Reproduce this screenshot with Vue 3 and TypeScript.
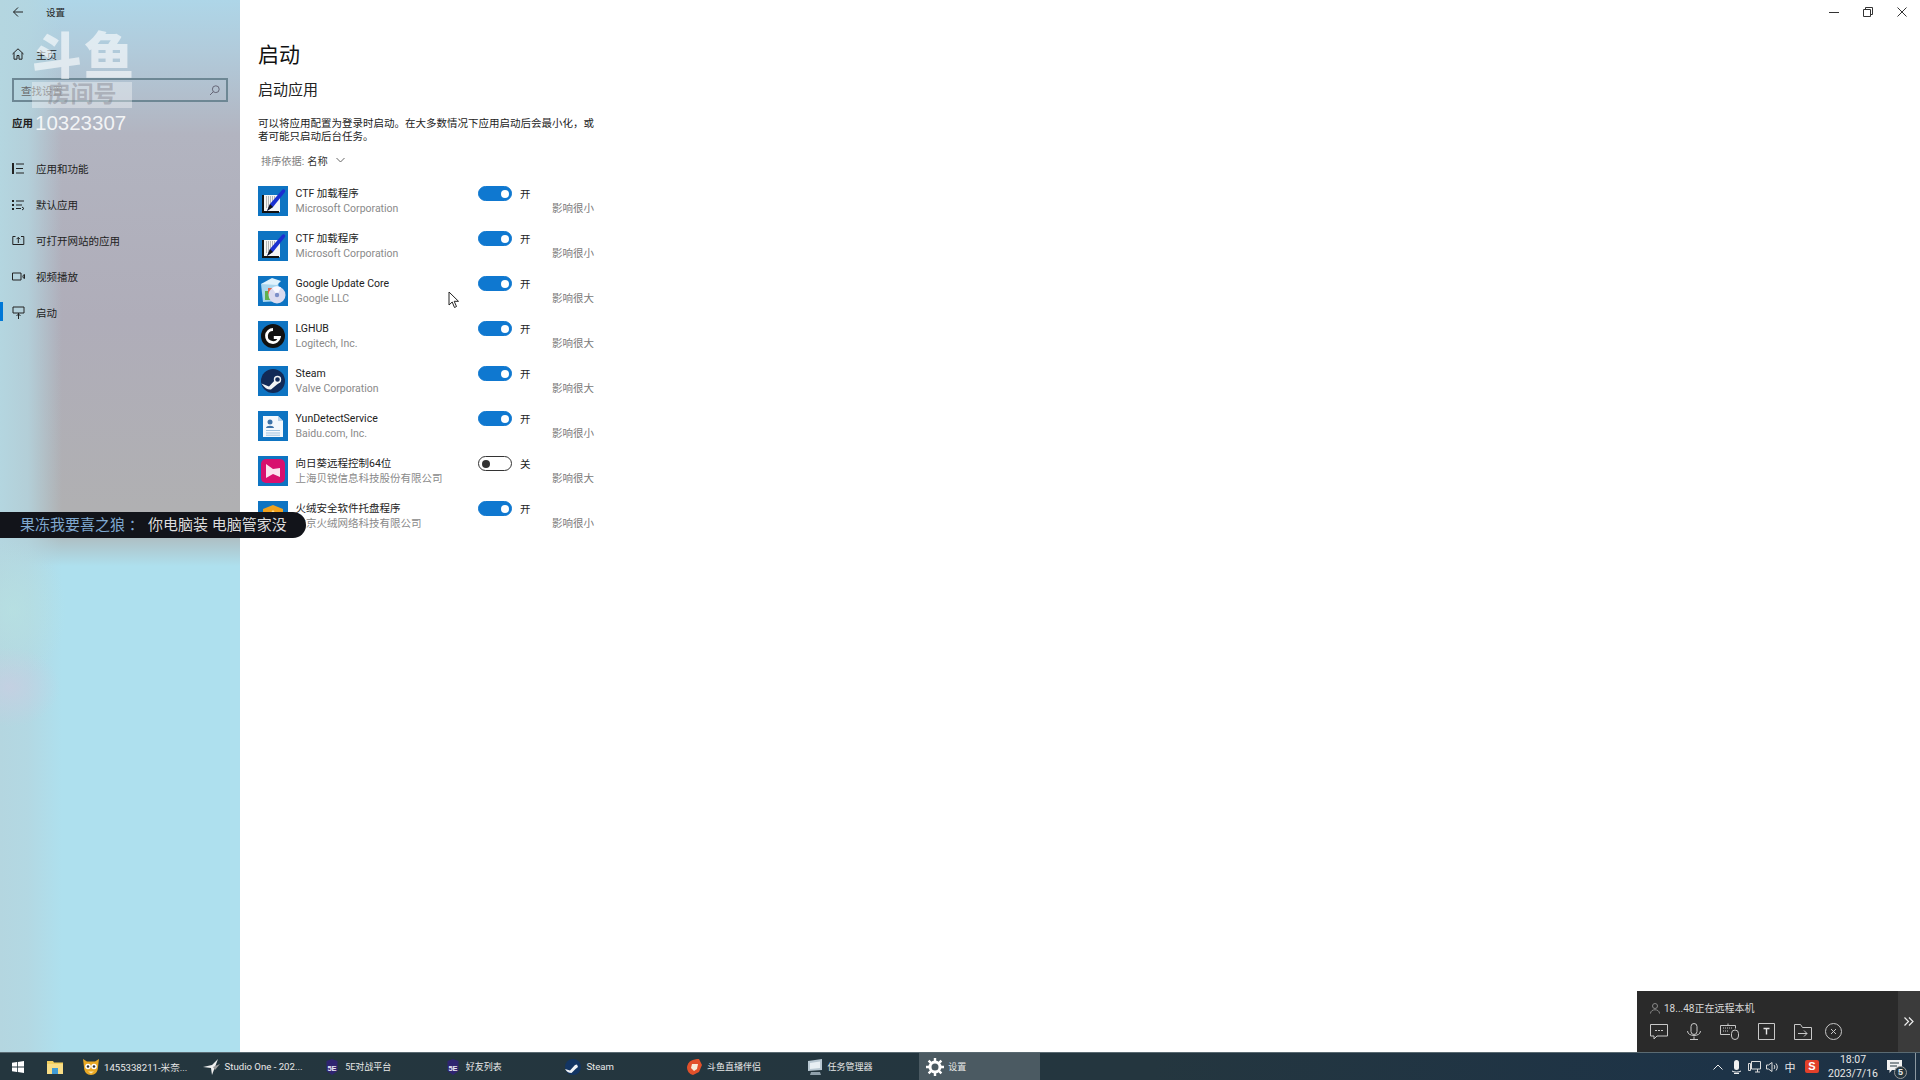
<script setup lang="ts">
interface StartupApp {
  name: string;
  company: string;
  on: boolean;
  impact: string;
  icon: string;
}

const apps: StartupApp[] = [
  { name: "CTF 加载程序", company: "Microsoft Corporation", on: true, impact: "影响很小", icon: "ctf" },
  { name: "CTF 加载程序", company: "Microsoft Corporation", on: true, impact: "影响很小", icon: "ctf" },
  { name: "Google Update Core", company: "Google LLC", on: true, impact: "影响很大", icon: "google" },
  { name: "LGHUB", company: "Logitech, Inc.", on: true, impact: "影响很大", icon: "lghub" },
  { name: "Steam", company: "Valve Corporation", on: true, impact: "影响很大", icon: "steam" },
  { name: "YunDetectService", company: "Baidu.com, Inc.", on: true, impact: "影响很小", icon: "doc" },
  { name: "向日葵远程控制64位", company: "上海贝锐信息科技股份有限公司", on: false, impact: "影响很大", icon: "sunflower" },
  { name: "火绒安全软件托盘程序", company: "北京火绒网络科技有限公司", on: true, impact: "影响很小", icon: "huorong" },
];

const navItems = [
  { label: "应用和功能", icon: "list" },
  { label: "默认应用", icon: "defaults" },
  { label: "可打开网站的应用", icon: "web" },
  { label: "视频播放", icon: "video" },
  { label: "启动", icon: "startup" },
];

const tasks = [
  { label: "1455338211-米奈...", icon: "cat" },
  { label: "Studio One - 202...", icon: "studio" },
  { label: "5E对战平台", icon: "se", cjk: true },
  { label: "好友列表", icon: "se", cjk: true },
  { label: "Steam", icon: "steam" },
  { label: "斗鱼直播伴侣", icon: "douyu", cjk: true },
  { label: "任务管理器", icon: "taskmgr", cjk: true },
  { label: "设置", icon: "gear", cjk: true, active: true },
];
</script>

<template>
  <div class="screen">
    <div class="window">
      <aside class="sidebar">
        <div class="titlebar">
          <svg class="back" width="12" height="12" viewBox="0 0 12 12"><path d="M11 6H1.500M6 1.500 1.500 6 6 10.500" fill="none" stroke="#222" stroke-width="1" /></svg>
          <span>设置</span>
        </div>
        <div class="home">
          <svg width="12" height="12" viewBox="0 0 12 12"><path d="M.5 6 6 .8 11.500 6M2 4.800v6.400h3V7.500h2v3.700h3V4.800" fill="none" stroke="#222" stroke-width="1" /></svg>
          <span>主页</span>
        </div>
        <div class="search">
          <span>查找设置</span>
          <svg width="11" height="11" viewBox="0 0 11 11"><circle cx="6.800" cy="4.200" r="3.400" fill="none" stroke="#667" stroke-width="1" /><path d="M4.400 6.600 1 10" stroke="#667" stroke-width="1" /></svg>
        </div>
        <div class="group">应用</div>
        <nav class="nav">
          <div v-for="(item, i) in navItems" :key="item.label" :class="['nav-item', { current: i === navItems.length - 1 }]">
            <svg width="13" height="13" viewBox="0 0 13 13" fill="none" stroke="#222" stroke-width="1">
              <template v-if="item.icon === 'list'"><path d="M1 1v11" stroke-width="2" /><path d="M4 2h8M4 6.500h7M4 11h8" /></template>
              <template v-else-if="item.icon === 'defaults'"><path d="M1 2v2M1 6v2M1 10v2" stroke-width="2" /><path d="M4 3h8M4 7h6M4 10.500h5M10 9l2 1.500-2 1.500" /></template>
              <template v-else-if="item.icon === 'web'"><path d="M3.500 2.500H.8v8h11v-8H9M6.300 9V3.500M4.500 5.200l1.800-1.800 1.800 1.800" /></template>
              <template v-else-if="item.icon === 'video'"><path d="M.5 3h8.500v7H.5zM11 5.500l1.500-1v4l-1.500-1z" /></template>
              <template v-else><path d="M1 1h11v6H1zM6.500 7v6M4.500 10l2-2 2 2" /></template>
            </svg>
            <span>{{ item.label }}</span>
          </div>
        </nav>
      </aside>

      <main class="content">
        <h1>启动</h1>
        <h2>启动应用</h2>
        <p>可以将应用配置为登录时启动。在大多数情况下应用启动后会最小化，或者可能只启动后台任务。</p>
        <div class="sort">
          <span class="sort-key">排序依据:</span>
          <span>名称</span>
          <svg width="9" height="6" viewBox="0 0 9 6"><path d="M.5 1 4.500 5l4-4" fill="none" stroke="#666" stroke-width="1" /></svg>
        </div>

        <div class="rows">
          <div v-for="(app, i) in apps" :key="i" class="row">
            <svg class="app-icon" width="30" height="30" viewBox="0 0 30 30">
              <rect width="30" height="30" fill="#0e74c2" />
              <template v-if="app.icon === 'ctf'">
                <path d="M5 9h17v17H4z" fill="#f5f5f5" />
                <path d="M8 11h10M8 13h9M8 15h8M8 17h7M8 19h6M8 21h5" stroke="#777" stroke-width="1" stroke-dasharray="1 1" />
                <path d="M4 9v18h17v-2H6V9z" fill="#111" />
                <path d="M9 25 12 18 24 4c1.500-1.500 4-.5 3 2L15 21z" fill="#1a2fd0" />
                <path d="M9 25 12 18l3 3z" fill="#111" />
              </template>
              <template v-else-if="app.icon === 'google'">
                <path d="M3 8 20 5l2 20-17 1z" fill="#a9d6ee" />
                <path d="M3 8 14 2l9 3-4 4z" fill="#dff2fc" />
                <path d="M7 15h6v9H7z" fill="#62b04e" />
                <path d="M10 12h4v6h-4z" fill="#e0674a" />
                <circle cx="19" cy="19" r="8.500" fill="#dcdcf0" />
                <path d="M19 19 14 12a8.500 8.500 0 0 1 9-.5z" fill="#f8f8ff" />
                <circle cx="19" cy="19" r="2.200" fill="#7c8fc8" />
              </template>
              <template v-else-if="app.icon === 'lghub'">
                <circle cx="15" cy="15" r="12" fill="#111" />
                <path d="M15 8.500a6.500 6.500 0 1 0 6.300 8h-5.500" fill="none" stroke="#fff" stroke-width="2.800" />
              </template>
              <template v-else-if="app.icon === 'steam'">
                <circle cx="15" cy="15" r="12" fill="#122a57" />
                <path d="M3.500 17.500 11 20.500 18 13l3-1 1.500 4-3.500 2.500-6 5c-3 .5-6-1-9.500-6z" fill="#f2f4f6" />
                <circle cx="19.500" cy="13.500" r="3" fill="#122a57" stroke="#f2f4f6" stroke-width="1.400" />
              </template>
              <template v-else-if="app.icon === 'doc'">
                <path d="M5 5h15l5 5v16H5z" fill="#f4f8fc" />
                <path d="M20 5v5h5z" fill="#b9d3ea" />
                <circle cx="12" cy="11" r="2.500" fill="#3d72a8" />
                <path d="M8 17c0-3 8-3 8 0z" fill="#3d72a8" />
                <path d="M8 19.500h14M8 22h14M8 24.200h14" stroke="#9fc3e0" stroke-width="1" />
              </template>
              <template v-else-if="app.icon === 'sunflower'">
                <rect x="3" y="3" width="24" height="24" rx="5" fill="#d8106e" />
                <path d="M8 8 15 13l7-1v9l-7-3-7 4z" fill="#fbe3ee" />
              </template>
              <template v-else>
                <path d="M15 4 25 8v9c0 5-5 8-10 10-5-2-10-5-10-10V8z" fill="#f0a21e" />
                <path d="M15 9l4 5-1.500 5h-5L11 14z" fill="#ffe08a" />
              </template>
            </svg>
            <div class="app-text">
              <div class="app-name">{{ app.name }}</div>
              <div class="app-company">{{ app.company }}</div>
            </div>
            <div class="app-side">
              <div class="toggle-line">
                <span :class="['toggle', { on: app.on }]"><i></i></span>
                <span class="state">{{ app.on ? "开" : "关" }}</span>
              </div>
              <div class="impact">{{ app.impact }}</div>
            </div>
          </div>
        </div>

        <div class="win-controls">
          <svg width="10" height="10" viewBox="0 0 10 10"><path d="M0 5.500h10" stroke="#333" stroke-width="1" /></svg>
          <svg width="10" height="10" viewBox="0 0 10 10"><path d="M.5 2.500h7v7h-7zM2.500 2.500v-2h7v7h-2" fill="none" stroke="#333" stroke-width="1" /></svg>
          <svg width="10" height="10" viewBox="0 0 10 10"><path d="M.5.500l9 9M9.500.500l-9 9" stroke="#333" stroke-width="1" /></svg>
        </div>
      </main>
    </div>

    <footer class="taskbar">
      <div class="task-start">
        <svg width="12" height="12" viewBox="0 0 12 12"><path d="M0 1.800 5 1v4.600H0zM5.800.9 12 0v5.600H5.800zM0 6.400h5V11l-5-.8zM5.800 6.400H12V12l-6.200-.9z" fill="#fff" /></svg>
      </div>
      <div class="task-start files">
        <svg width="16" height="14" viewBox="0 0 16 14"><path d="M0 1h6l1 1.500h9V14H0z" fill="#f2cf5f" /><path d="M0 4h16v10H0z" fill="#f8dd86" /><path d="M5 8h6v6H5z" fill="#3f9bd6" /></svg>
      </div>
      <div v-for="task in tasks" :key="task.label" :class="['task', { active: task.active, cjk: task.cjk }]">
        <svg class="task-icon" width="18" height="18" viewBox="0 0 18 18">
          <template v-if="task.icon === 'cat'">
            <path d="M1 1 5 3.500h8L17 1l-1 8c0 5-3 8-7 8s-7-3-7-8z" fill="#eaa925" />
            <circle cx="6" cy="8.500" r="2.800" fill="#fff" /><circle cx="12" cy="8.500" r="2.800" fill="#fff" />
            <circle cx="6" cy="8.500" r="1.300" fill="#333" /><circle cx="12" cy="8.500" r="1.300" fill="#333" />
            <path d="M6 13.500h6l-3 2z" fill="#fbe8b0" />
          </template>
          <template v-else-if="task.icon === 'studio'">
            <path d="M0 9 9 7 15 1 12 9 9 17 8 10z" fill="#f1f1f1" />
            <path d="M10 9 17 6 12 12z" fill="#9a9a9a" />
          </template>
          <template v-else-if="task.icon === 'se'">
            <path d="M3.500 3 9 1l5.500 2v10L9 17l-5.500-4z" fill="#2f2470" />
            <text x="9" y="12.500" text-anchor="middle" font-size="7.500" font-weight="700" fill="#e8e8f4" font-family="Liberation Sans">5E</text>
          </template>
          <template v-else-if="task.icon === 'steam'">
            <circle cx="9" cy="9" r="8" fill="#133563" />
            <path d="M1 11 6 12.500 11 7l2-.5 1 2.500-2.500 2-4 4C5 15 3 14 1 11z" fill="#f0f3f6" />
          </template>
          <template v-else-if="task.icon === 'douyu'">
            <path d="M2 9C3 3 8 1 14 1l3 6-3 7-6 3C4 16 2 13 2 9z" fill="#e2512b" />
            <path d="M7 6h6l-1 5-3 2-3-3z" fill="#f7ecd8" />
          </template>
          <template v-else-if="task.icon === 'taskmgr'">
            <path d="M2 3 16 1v11L2 13z" fill="#b9c8d2" />
            <path d="M4 5l10-1.500v6.500L4 11z" fill="#e8eff3" />
            <path d="M5 14h9l1 3H4z" fill="#8fa0ab" />
          </template>
          <template v-else>
            <circle cx="9" cy="9" r="5" fill="none" stroke="#fff" stroke-width="3" />
            <path d="M9 0v4M9 14v4M0 9h4M14 9h4M2.600 2.600l2.800 2.800M12.600 12.600l2.800 2.800M15.400 2.600l-2.800 2.800M5.400 12.600l-2.800 2.800" stroke="#fff" stroke-width="2.400" />
          </template>
        </svg>
        <span>{{ task.label }}</span>
      </div>

      <div class="tray">
        <span class="tray-cell"><svg width="10" height="6" viewBox="0 0 10 6"><path d="M.5 5.500 5 1l4.500 4.500" fill="none" stroke="#eee" stroke-width="1" /></svg></span>
        <span class="tray-cell"><svg width="9" height="14" viewBox="0 0 9 14"><rect x="2" y="0" width="5" height="10" rx="2.500" fill="#f2f2f2" /><path d="M0 11c2 1.500 7 1.500 9 0M2 13.500h5" stroke="#f2f2f2" stroke-width="1" fill="none" /></svg></span>
        <span class="tray-cell"><svg width="13" height="12" viewBox="0 0 13 12"><path d="M3.500.5h9v7.500h-9zM7 11h5M9.500 8v3M.5 2.500h2v7h-2z" fill="none" stroke="#ddd" stroke-width="1" /></svg></span>
        <span class="tray-cell"><svg width="13" height="12" viewBox="0 0 13 12"><path d="M.5 4v4h2L6 10.500v-9L2.500 4zM8 4c1 1 1 3 0 4M10 2.500c1.700 2 1.700 5 0 7" fill="none" stroke="#ddd" stroke-width="1" /></svg></span>
        <span class="tray-cell tray-ime">中</span>
        <span class="tray-sogou">S</span>
        <div class="clock"><span>18:07</span><span>2023/7/16</span></div>
        <div class="notify">
          <svg width="15" height="13" viewBox="0 0 15 13"><path d="M0 0h15v10H5l-2.500 3V10H0z" fill="#f2f2f2" /><path d="M3 3h9M3 6h7" stroke="#24363f" stroke-width="1" /></svg>
          <b>5</b>
        </div>
      </div>
    </footer>

    <!-- overlays on top of the captured desktop -->
    <div class="watermark">
      <div class="wm-logo">斗鱼</div>
      <div class="wm-plate">房间号</div>
      <div class="wm-id">10323307</div>
    </div>

    <div class="danmaku">
      <span class="dm-user">果冻我要喜之狼 ：</span>
      <span>你电脑装 电脑管家没</span>
    </div>

    <svg class="cursor" width="12" height="18" viewBox="0 0 12 18"><path d="M1 1v13l3.200-3 2.300 5.500 2-1-2.300-5.200h4.300z" fill="#fff" stroke="#222" stroke-width="1" /></svg>

    <div class="remote">
      <div class="remote-body">
        <div class="remote-user">
          <svg width="10" height="11" viewBox="0 0 10 11"><circle cx="5" cy="3" r="2.500" fill="none" stroke="#888" /><path d="M.5 10.500c0-5 9-5 9 0" fill="none" stroke="#888" /></svg>
          <span>18...48正在远程本机</span>
        </div>
        <div class="remote-tools">
          <svg width="18" height="16" viewBox="0 0 18 16"><path d="M.5.500h17v11.500H7l-3 3v-3H.500z" fill="none" stroke="#c8c8c8" /><path d="M5 6.500h2M8 6.500h2M11 6.500h2" stroke="#c8c8c8" /></svg>
          <svg width="14" height="17" viewBox="0 0 14 17"><rect x="4" y=".5" width="6" height="11" rx="3" fill="none" stroke="#c8c8c8" /><path d="M.5 8c0 6 13 6 13 0M7 13.500v3M3 16.500h8" fill="none" stroke="#c8c8c8" /></svg>
          <svg width="19" height="17" viewBox="0 0 19 17"><path d="M10 11.500H.5v-9h15v3M8 2.500V.5" fill="none" stroke="#c8c8c8" /><path d="M3 5h9M3 8h6" stroke="#c8c8c8" stroke-dasharray="1 1" /><rect x="11.500" y="7" width="7" height="9.500" rx="3.500" fill="#2b2b2b" stroke="#c8c8c8" /></svg>
          <svg width="17" height="17" viewBox="0 0 17 17"><path d="M.5.500h16v16H.5z" fill="none" stroke="#c8c8c8" /><path d="M5.500 5.500h6M8.500 5.500v6" stroke="#e4e4e4" stroke-width="1.400" fill="none" /></svg>
          <svg width="18" height="16" viewBox="0 0 18 16"><path d="M.5 15.500V.5h6l2 3h9v12z" fill="none" stroke="#c8c8c8" /><path d="M4 9.500h9M10 6.500l3 3-3 3" fill="none" stroke="#c8c8c8" /></svg>
          <svg class="tool-close" width="17" height="17" viewBox="0 0 17 17"><circle cx="8.500" cy="8.500" r="8" fill="none" stroke="#c8c8c8" /><path d="M6 6l5 5M11 6l-5 5" stroke="#c8c8c8" /></svg>
        </div>
      </div>
      <div class="remote-fold">
        <svg width="10" height="9" viewBox="0 0 10 9"><path d="M.5.500l4 4-4 4M5 .5l4 4-4 4" fill="none" stroke="#eee" stroke-width="1.200" /></svg>
      </div>
    </div>
  </div>
</template>

<style>
html,
body {
  margin: 0;
  background: #fff;
  overflow: hidden;
}
</style>

<style scoped>
.screen {
  position: relative;
  width: 1920px;
  height: 1080px;
  display: flex;
  flex-direction: column;
  overflow: hidden;
  font-family: Roboto, "Noto Sans CJK SC", sans-serif;
  font-size: 10.5px;
  color: #222;
}

.window {
  flex: 1;
  display: flex;
  min-height: 0;
}

.sidebar {
  width: 240px;
  flex: none;
  background:
    radial-gradient(ellipse 50px 40px at 10px 687px, rgba(206, 204, 226, 0.6), rgba(206, 204, 226, 0)),
    radial-gradient(ellipse 55px 70px at 12px 610px, rgba(184, 228, 226, 0.6), rgba(184, 228, 226, 0)),
    linear-gradient(90deg, rgba(180, 214, 224, 1) 0, rgba(180, 214, 224, 0.8) 28px, rgba(180, 214, 224, 0) 62px),
    linear-gradient(180deg, #aed6e8 0, #b1cbdb 50px, #b2b4c0 135px, #afadb9 320px, #b0b0b2 510px, #aebfc4 538px, #aee0ee 566px, #aee0ee 100%);
}

.titlebar {
  height: 24px;
  display: flex;
  align-items: center;
  padding-left: 12px;
  gap: 22px;
  font-size: 9.5px;
}

.home {
  height: 36px;
  margin-top: 12px;
  display: flex;
  align-items: center;
  padding-left: 12px;
  gap: 12px;
}

.search {
  height: 24px;
  margin: 6px 12px 0;
  box-sizing: border-box;
  border: 2px solid #6d8794;
  display: flex;
  align-items: center;
  justify-content: space-between;
  padding: 0 6px 0 7px;
  color: #666;
}

.group {
  margin: 15px 0 0 12px;
  font-weight: 700;
  line-height: 14px;
}

.nav {
  margin-top: 19px;
}

.nav-item {
  position: relative;
  height: 36px;
  display: flex;
  align-items: center;
  padding-left: 12px;
  gap: 11px;
}

.nav-item.current::before {
  content: "";
  position: absolute;
  left: 0;
  top: 8px;
  width: 3px;
  height: 19px;
  background: #0078d7;
}

.content {
  position: relative;
  flex: 1;
  background: #fff;
  padding-left: 18px;
}

h1 {
  margin: 0;
  padding-top: 42px;
  font-size: 21px;
  font-weight: 400;
  line-height: 26px;
  color: #111;
}

h2 {
  margin: 12px 0 0;
  font-size: 15px;
  font-weight: 400;
  line-height: 20px;
  color: #222;
}

p {
  width: 338px;
  margin: 17px 0 0;
  line-height: 13px;
}

.sort {
  display: flex;
  align-items: center;
  margin: 10px 0 0 3px;
  height: 14px;
  color: #333;
  font-size: 10.2px;
  gap: 3px;
}

.sort-key {
  color: #808080;
}

.sort svg {
  margin-left: 5px;
}

.rows {
  width: 336px;
  margin-top: 19px;
  display: flex;
  flex-direction: column;
  gap: 15px;
}

.row {
  display: flex;
  height: 30px;
}

.app-icon {
  flex: none;
}

.app-text {
  width: 182.5px;
  padding-left: 7.5px;
  flex: none;
}

.app-name,
.app-company {
  height: 15px;
  line-height: 15px;
  white-space: nowrap;
}

.app-company {
  color: #8a8a8a;
}

.app-side {
  flex: 1;
}

.toggle-line {
  height: 15px;
  display: flex;
  align-items: center;
  gap: 8px;
}

.toggle {
  width: 34px;
  height: 15px;
  box-sizing: border-box;
  border: 1.5px solid #333;
  border-radius: 8px;
  display: flex;
  align-items: center;
  justify-content: flex-start;
  padding: 0 2.5px;
}

.toggle i {
  width: 8px;
  height: 8px;
  border-radius: 50%;
  background: #333;
}

.toggle.on {
  background: #0f78d0;
  border-color: #0f78d0;
  justify-content: flex-end;
}

.toggle.on i {
  background: #fff;
}

.impact {
  height: 15px;
  line-height: 15px;
  text-align: right;
  color: #7a7a7a;
}

.win-controls {
  position: absolute;
  top: 7px;
  right: 13px;
  display: flex;
  gap: 24px;
}

.taskbar {
  height: 28px;
  flex: none;
  display: flex;
  align-items: center;
  box-sizing: border-box;
  border-top: 1px solid #5a6a72;
  background: linear-gradient(90deg, #24363e 0, #24363f 60%, #1d3347 90%, #1e3143 100%);
  color: #e8e8e8;
}

.task-start {
  width: 36px;
  height: 100%;
  flex: none;
  display: flex;
  align-items: center;
  padding-left: 12px;
  box-sizing: border-box;
}

.task-start.files {
  width: 39px;
  padding-left: 11px;
}

.task {
  width: 120.6px;
  height: 100%;
  flex: none;
  display: flex;
  align-items: center;
  gap: 4px;
  padding-left: 7px;
  box-sizing: border-box;
  white-space: nowrap;
  overflow: hidden;
  font-size: 9.6px;
}

.task.cjk {
  font-size: 9px;
}

.task-icon {
  flex: none;
}

.task.active {
  background: #4b5a62;
}

.tray {
  flex: 1;
  height: 100%;
  display: flex;
  align-items: center;
  justify-content: flex-end;
  padding-right: 4px;
}

.tray-cell {
  width: 18px;
  display: flex;
  justify-content: center;
}

.tray-ime {
  font-size: 11px;
}

.tray-sogou {
  width: 14px;
  height: 13px;
  margin-left: 6px;
  border-radius: 2px;
  background: #e2402a;
  color: #fff;
  font: 700 11px/13px "Liberation Sans", sans-serif;
  text-align: center;
}

.clock {
  width: 60px;
  margin-left: 4px;
  padding-top: 1px;
  display: flex;
  flex-direction: column;
  align-items: center;
  line-height: 14px;
}

.notify {
  position: relative;
  width: 33px;
  height: 100%;
  box-sizing: border-box;
  padding-left: 4px;
  display: flex;
  align-items: center;
  border-right: 1px solid #8c98a0;
}

.notify b {
  position: absolute;
  left: 11px;
  top: 13px;
  width: 11px;
  height: 11px;
  border: 1px solid #999;
  border-radius: 50%;
  background: #24363f;
  font: 700 9px/11px "Liberation Sans", sans-serif;
  text-align: center;
}

.watermark {
  position: absolute;
  left: 32px;
  top: 31px;
  width: 104px;
  pointer-events: none;
}

.wm-logo {
  height: 49px;
  font-size: 50px;
  font-weight: 900;
  line-height: 52px;
  letter-spacing: 2px;
  color: rgba(255, 255, 255, 0.6);
}

.wm-plate {
  height: 26px;
  margin-top: 2px;
  width: 100px;
  background: rgba(255, 255, 255, 0.36);
  font-size: 23px;
  font-weight: 700;
  line-height: 26px;
  text-align: center;
  color: rgba(130, 130, 140, 0.45);
}

.wm-id {
  margin: 3px 0 0 3px;
  font: 20.5px/24px "Liberation Sans", sans-serif;
  color: rgba(255, 255, 255, 0.85);
}

.danmaku {
  position: absolute;
  left: 0;
  top: 512px;
  width: 306px;
  height: 26px;
  box-sizing: border-box;
  padding-left: 20px;
  border-radius: 0 13px 13px 0;
  background: #12141a;
  font-size: 15px;
  line-height: 26px;
  white-space: nowrap;
  color: #dedede;
}

.dm-user {
  display: inline-block;
  width: 128px;
  color: #7fa8cf;
}

.cursor {
  position: absolute;
  left: 448px;
  top: 291px;
}

.remote {
  position: absolute;
  left: 1637px;
  top: 991px;
  width: 283px;
  height: 61px;
  display: flex;
  color: #d8d8d8;
}

.remote-body {
  flex: 1;
  background: #2a2a2a;
  padding: 11px 0 0 13px;
  box-sizing: border-box;
}

.remote-user {
  height: 13px;
  display: flex;
  align-items: center;
  gap: 4px;
  line-height: 13px;
  font-size: 10px;
}

.remote-tools {
  margin-top: 8px;
  display: flex;
  align-items: center;
  gap: 19px;
}

.tool-close {
  margin-left: -6px;
}

.remote-fold {
  width: 22px;
  background: #3b3b3b;
  display: flex;
  align-items: center;
  justify-content: center;
}
</style>
